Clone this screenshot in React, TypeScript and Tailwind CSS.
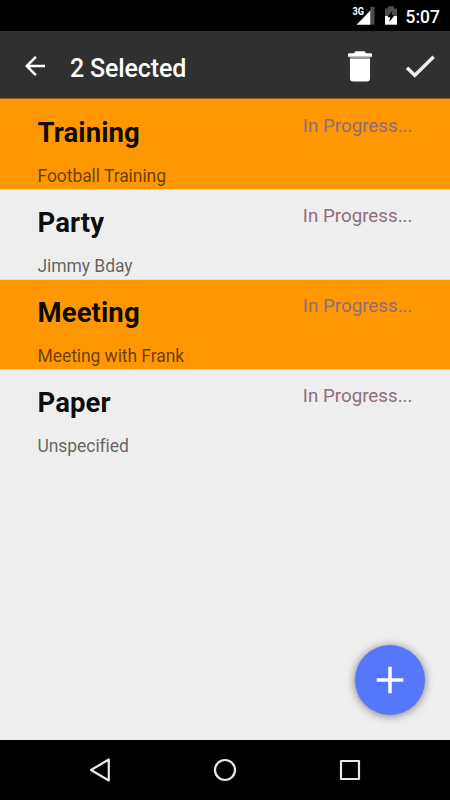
type Task = { title: string; note: string; selected: boolean };

const tasks: Task[] = [
  { title: "Training", note: "Football Training", selected: true },
  { title: "Party", note: "Jimmy Bday", selected: false },
  { title: "Meeting", note: "Meeting with Frank", selected: true },
  { title: "Paper", note: "Unspecified", selected: false },
];

function StatusBar() {
  return (
    <div className="flex h-[31px] items-start bg-black pl-[352px]">
      <svg width="98" height="31" viewBox="0 0 98 31">
        <text x="0.5" y="14.8" fill="#fff" fontSize="10.5" fontWeight="700" textLength="11.5" lengthAdjust="spacingAndGlyphs">3G</text>
        <path d="M18.3 7H22.5V24.7H18.3Z" fill="#4d4d4d" />
        <path d="M4.5 24.7L18.3 10.5V24.7Z" fill="#fff" />
        <path d="M33 8.5H36V6.3H41.8V8.5H45V16H33Z" fill="#4d4d4d" />
        <path d="M33 16H45V24.7H33Z" fill="#fff" />
        <path d="M40.6 10.5L35.5 17.2H38.4L37 22.3L42.6 15.3H39.5Z" fill="#000" />
        <text x="53.6" y="22.7" fill="#fff" fontSize="18" fontWeight="500" textLength="34.2" lengthAdjust="spacingAndGlyphs">5:07</text>
      </svg>
    </div>
  );
}

function Header() {
  return (
    <header className="flex h-[68px] items-center border-b border-[#855a20] bg-[#303030] text-white">
      <svg className="ml-[20px] mt-[3px]" width="30" height="30" viewBox="0 0 24 24">
        <path d="M20 11H7.83l5.59-5.59L12 4l-8 8 8 8 1.41-1.41L7.83 13H20z" fill="#fff" />
      </svg>
      <h1 className="ml-[20px] mt-[8px] w-[260px] whitespace-nowrap text-[25px] leading-[30px] font-medium tracking-[-0.15px]">2 Selected</h1>
      <svg className="ml-[10px] mt-[3px]" width="40" height="40" viewBox="0 0 40 40">
        <path d="M8 8.2Q8 7.2 9 7.2H14L15.5 5.2H24.5L26 7.2H31Q32 7.2 32 8.2V10.7H8Z" fill="#fff" />
        <path d="M10 12.5H30V32.2Q30 35.5 26.7 35.5H13.3Q10 35.5 10 32.2Z" fill="#fff" />
        <path d="M9.5 11.5H30.5" stroke="#999" strokeWidth="1.6" />
      </svg>
      <svg className="ml-[20px] mt-[3px]" width="40" height="40" viewBox="0 0 40 40">
        <path d="M7 21.8L14.8 29.3L33.7 10.7" fill="none" stroke="#eee" strokeWidth="3.4" />
      </svg>
    </header>
  );
}

function TaskRow({ task }: { task: Task }) {
  return (
    <li className={`flex h-[90px] items-start justify-between border-b px-[37.5px] last:border-transparent ${task.selected ? "border-[#eccdb0] bg-[#ff9800]" : "border-[#e2dcda] bg-[#eeeeee]"}`}>
      <div className="pt-[17px]">
        <h2 className="text-[27.5px] leading-[32px] font-bold tracking-[0.1px] text-black/95">{task.title}</h2>
        <p className="mt-[17px] text-[17.5px] leading-[21px] tracking-[-0.07px] text-black/60">{task.note}</p>
      </div>
      <span className="pt-[15px] text-[18.75px] leading-[22px] text-[#8f6d80]">In Progress...</span>
    </li>
  );
}

function NavBar() {
  return (
    <nav className="flex h-[60px] items-center justify-center gap-[85px] bg-black">
      <svg width="40" height="40" viewBox="0 0 40 40" fill="none" stroke="#e8e8e8" strokeWidth="2.2" strokeLinejoin="round">
        <path d="M11 20L28.8 9.5V30.5Z" />
      </svg>
      <svg width="40" height="40" viewBox="0 0 40 40" fill="none" stroke="#e8e8e8" strokeWidth="2.2">
        <circle cx="20" cy="20" r="10" />
      </svg>
      <svg width="40" height="40" viewBox="0 0 40 40" fill="none" stroke="#e8e8e8" strokeWidth="2.2" strokeLinejoin="round">
        <rect x="11" y="11" width="18" height="18" />
      </svg>
    </nav>
  );
}

export default function App() {
  return (
    <div className="flex h-[800px] w-[450px] flex-col overflow-hidden bg-[#eeeeee] font-[Roboto,sans-serif]">
      <StatusBar />
      <Header />
      <main className="relative flex-1">
        <ul className="border-t border-[#ff9800]">
          {tasks.map((task) => (
            <TaskRow key={task.title} task={task} />
          ))}
        </ul>
        <button aria-label="Add task" className="absolute right-[25px] bottom-[25px] flex h-[70px] w-[70px] items-center justify-center rounded-full bg-[#5677fc] shadow-[0_1px_8px_rgba(0,0,0,0.5)]">
          <svg width="30" height="30" viewBox="0 0 30 30">
            <path d="M15 1.7V28.3M1.7 15H28.3" stroke="#fff" strokeWidth="3.5" />
          </svg>
        </button>
      </main>
      <NavBar />
    </div>
  );
}
